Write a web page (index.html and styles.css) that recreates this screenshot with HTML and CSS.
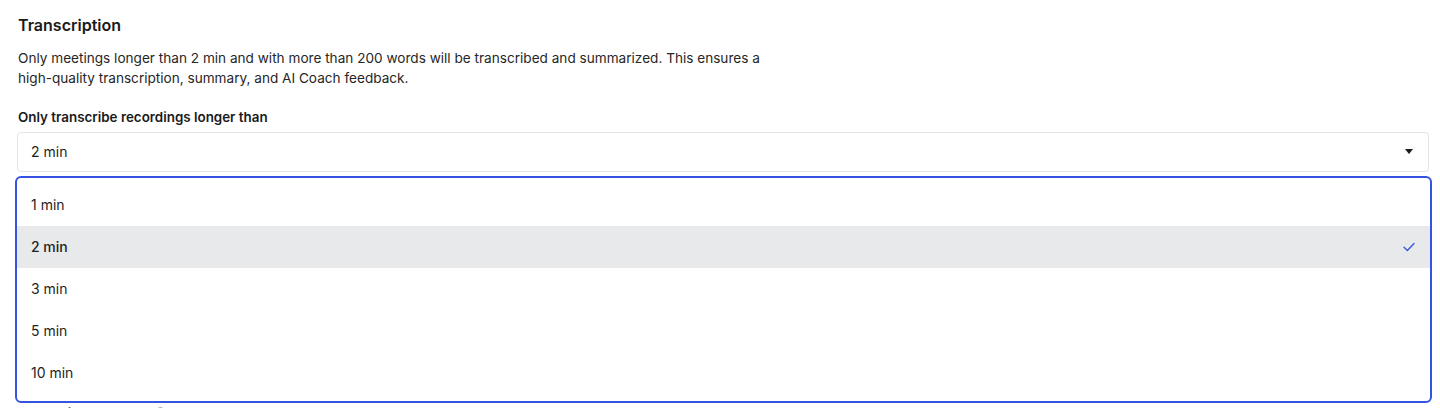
FILE: index.html
```html
<!DOCTYPE html>
<html lang="en">
<head>
<meta charset="utf-8">
<title>Transcription</title>
<link rel="stylesheet" href="styles.css">
</head>
<body>
<div class="page">
  <h2 class="title">Transcription</h2>
  <p class="desc">Only meetings longer than 2 min and with more than 200 words will be transcribed and summarized. This ensures a high-quality transcription, summary, and AI Coach feedback.</p>
  <div class="field">
    <div class="label">Only transcribe recordings longer than</div>
    <div class="select">
      <span class="value">2 min</span>
      <svg class="caret" width="8" height="5" viewBox="0 0 8 5"><path d="M0 0h8L4 5z" fill="#1a1a1a"/></svg>
    </div>
    <ul class="menu">
      <li class="opt">1 min</li>
      <li class="opt active">2 min
        <svg class="check" width="12" height="10" viewBox="0 0 12 10"><path d="M1 5.2l3.4 3.3L11 1.5" fill="none" stroke="#3553e0" stroke-width="1.3" stroke-linecap="round" stroke-linejoin="round"/></svg>
      </li>
      <li class="opt">3 min</li>
      <li class="opt">5 min</li>
      <li class="opt">10 min</li>
    </ul>
  </div>
  <div class="field next">
    <div class="label">Transcript language
      <svg class="info" width="13" height="13" viewBox="0 0 14 14"><circle cx="7" cy="7" r="6" fill="none" stroke="#8a8f98" stroke-width="1.2"/><path d="M7 6v4" stroke="#8a8f98" stroke-width="1.2"/><circle cx="7" cy="4.2" r="0.8" fill="#8a8f98"/></svg>
    </div>
  </div>
</div>
</body>
</html>
```

FILE: styles.css
```css
* { box-sizing: border-box; }
html, body { margin: 0; padding: 0; background: #ffffff; }
body {
  font-family: Inter, Roboto, "Liberation Sans", Arial, sans-serif;
  color: #1f1f1f;
  -webkit-font-smoothing: antialiased;
}
.page {
  padding: 15px 11px 0 17px;
  height: 408px;
  overflow: hidden;
}
.title {
  margin: 0 0 0 1px;
  font-size: 16px;
  line-height: 20px;
  font-weight: 600;
  color: #1a1a1a;
}
.desc {
  margin: 13px 0 0 1px;
  max-width: 770px;
  font-size: 13.6px;
  line-height: 20px;
  color: #262626;
}
.field { margin-top: 20px; }
.label {
  margin-left: 1px;
  font-size: 13.4px;
  line-height: 18px;
  font-weight: 600;
  color: #1a1a1a;
  display: flex;
  align-items: center;
  gap: 6px;
}
.select {
  margin-top: 6px;
  height: 40px;
  border: 1px solid #e3e4e8;
  border-radius: 4px;
  display: flex;
  align-items: center;
  justify-content: space-between;
  padding: 0 15px 1px 13px;
  font-size: 14px;
  color: #1f1f1f;
}
.caret { display: block; }
.menu {
  list-style: none;
  margin: 4px -3px 0 -2px;
  padding: 6px 0 7px;
  border: 2px solid #3553e0;
  border-radius: 6px;
  background: #fff;
}
.opt {
  height: 42px;
  display: flex;
  align-items: center;
  justify-content: space-between;
  padding: 0 15px 1px 14px;
  font-size: 14px;
  color: #1f1f1f;
}
.opt.active { background: #e8e9eb; font-weight: 500; }
.check { display: block; }
.field.next { margin-top: 1px; }
.info { display: block; }
```
